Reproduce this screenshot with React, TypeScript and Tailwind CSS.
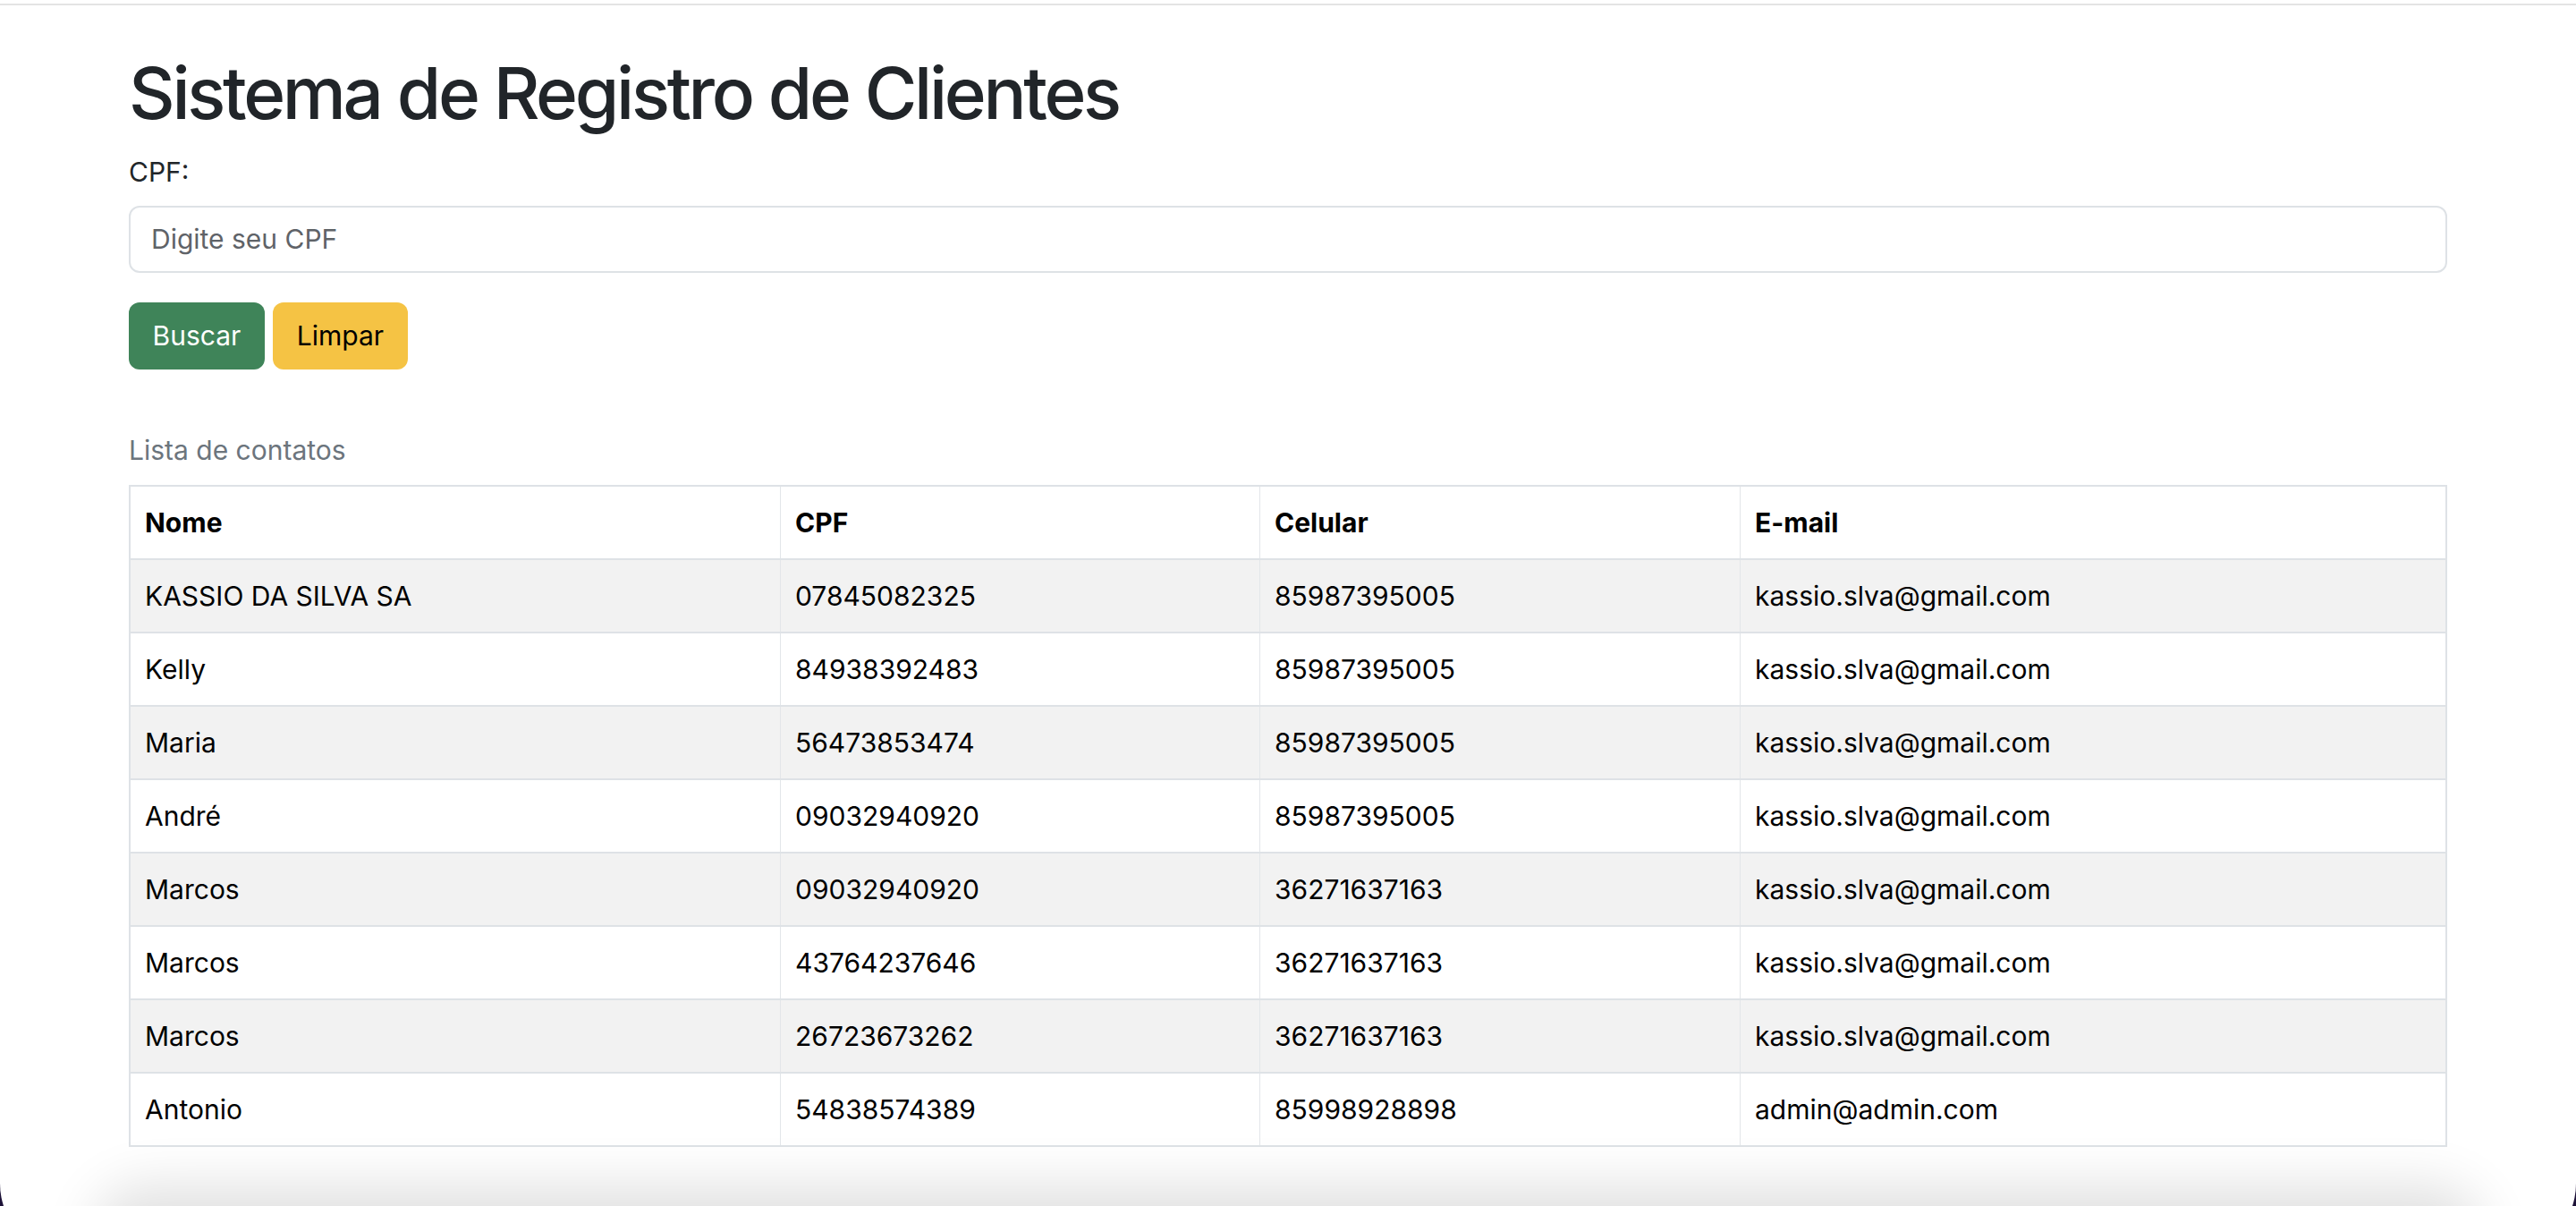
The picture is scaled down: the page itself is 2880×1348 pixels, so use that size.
import React from "react";

const rows = [
  ["KASSIO DA SILVA SA", "07845082325", "85987395005", "kassio.slva@gmail.com"],
  ["Kelly", "84938392483", "85987395005", "kassio.slva@gmail.com"],
  ["Maria", "56473853474", "85987395005", "kassio.slva@gmail.com"],
  ["André", "09032940920", "85987395005", "kassio.slva@gmail.com"],
  ["Marcos", "09032940920", "36271637163", "kassio.slva@gmail.com"],
  ["Marcos", "43764237646", "36271637163", "kassio.slva@gmail.com"],
  ["Marcos", "26723673262", "36271637163", "kassio.slva@gmail.com"],
  ["Antonio", "54838574389", "85998928898", "admin@admin.com"],
];

const grid = "grid grid-cols-[726px_536px_537px_789px]";

export default function App() {
  return (
    <div className="h-[1348px] overflow-hidden bg-[#1d1238]" style={{ fontFamily: "Inter, 'Noto Sans', sans-serif" }}>
      <div className="h-[1403px] overflow-hidden rounded-b-[80px] bg-white">
        <div className="h-[4px] bg-white" />
        <div className="h-[2px] bg-[#e4e4e4]" />
        <div className="mx-auto w-[2592px]">
          <h1 className="mt-[50px] text-[80px] font-medium leading-[96px] tracking-[-3.3px] text-[#212529]">
            Sistema de Registro de Clientes
          </h1>
          <label className="mt-[19px] block text-[30px] leading-[42px] text-[#212529]">CPF:</label>
          <div className="mt-[17px] flex h-[75px] items-center rounded-[12px] border-2 border-[#dee2e6] px-[23px] text-[30px] text-[#5f6368]">
            Digite seu CPF
          </div>
          <div className="mt-[33px] flex gap-[9px]">
            <button className="flex h-[75px] w-[152px] items-center justify-center rounded-[12px] bg-[#3f8459] text-[30px] text-white">
              Buscar
            </button>
            <button className="flex h-[75px] w-[151px] items-center justify-center rounded-[12px] bg-[#f5c344] text-[30px] text-black">
              Limpar
            </button>
          </div>
          <div className="mt-[69px] text-[30px] leading-[42px] text-[#6c757d]">Lista de contatos</div>
          <div className="mt-[18px] border-x-2 border-t-2 border-[#dee2e6] text-[30px] text-black">
            <div className={`${grid} h-[82px] border-b-2 border-[#dee2e6] font-bold`}>
              {["Nome", "CPF", "Celular", "E-mail"].map((h, i) => (
                <div key={h} className={`flex items-center px-[16px] ${i > 0 ? "border-l border-[#e3e6e9]" : ""}`}>
                  {h}
                </div>
              ))}
            </div>
            {rows.map((r, ri) => (
              <div
                key={ri}
                className={`${grid} h-[82px] border-b-2 border-[#dee2e6] ${ri % 2 === 0 ? "bg-[#f2f2f2]" : "bg-white"}`}
              >
                {r.map((c, i) => (
                  <div key={i} className={`flex items-center px-[16px] ${i > 0 ? "border-l border-[#e3e6e9]" : ""}`}>
                    {c}
                  </div>
                ))}
              </div>
            ))}
          </div>
        </div>
        <div className="mx-[130px] mt-[68px] h-[60px] rounded-[40px] bg-white shadow-[0_0_60px_25px_rgba(0,0,0,0.12)]" />
      </div>
    </div>
  );
}
